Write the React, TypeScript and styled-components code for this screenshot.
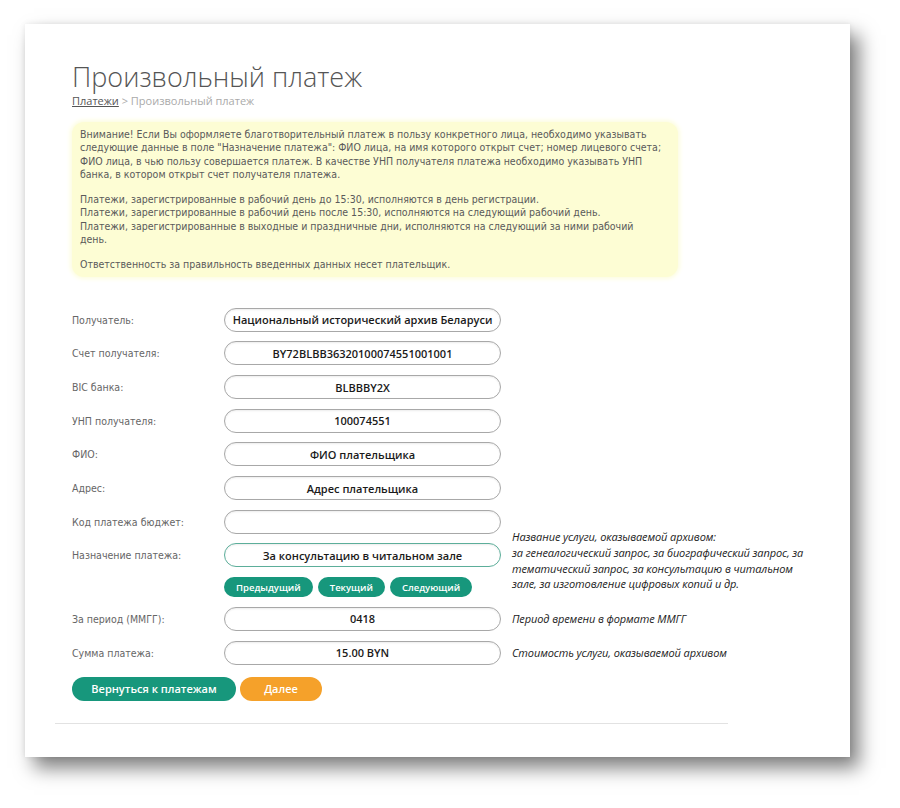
import React from "react";
import styled, { createGlobalStyle } from "styled-components";

const GlobalStyle = createGlobalStyle`
  html, body {
    margin: 0;
    padding: 0;
    background: #fff;
  }
  * { box-sizing: border-box; }
`;

const Page = styled.div`
  padding: 24px 0 0 25px;
  min-height: 808px;
`;

const Card = styled.div`
  width: 825px;
  height: 733px;
  padding: 37px 0 0 47px;
  background: #fff;
  box-shadow: 9px 11px 18px rgba(0, 0, 0, 0.5), 0 0 6px rgba(0, 0, 0, 0.08);
`;

const Title = styled.h1`
  margin: 0;
  font-family: "Open Sans", sans-serif;
  font-weight: 300;
  font-size: 27px;
  line-height: 31px;
  color: #555;
`;

const Crumbs = styled.div`
  margin-top: 2px;
  font-family: "Open Sans", sans-serif;
  font-size: 11px;
  line-height: 14px;
  color: #aaa;
`;

const CrumbLink = styled.a`
  color: #555;
  text-decoration: underline;
`;

const Notice = styled.div`
  margin-top: 14px;
  width: 606px;
  padding: 6px 8px 5px 8px;
  background: #fdfdd4;
  border-radius: 12px;
  box-shadow: 0 0 4px 2px #fdfde0;
  font-family: "DejaVu Sans Condensed", "DejaVu Sans", sans-serif;
  font-size: 10.5px;
  line-height: 13.3px;
  color: #5a5a5a;
  white-space: nowrap;
`;

const Para = styled.p`
  margin: 0;
  & + & { margin-top: 12px; }
`;

const Form = styled.div`
  margin-top: 31px;
  display: grid;
  grid-template-columns: 152px 277px 1fr;
  row-gap: 9.7px;
`;

const Label = styled.div`
  grid-column: 1;
  align-self: center;
  font-family: "DejaVu Sans Condensed", "DejaVu Sans", sans-serif;
  font-size: 10.5px;
  color: #666;
`;

const Field = styled.input<{ $accent?: boolean }>`
  grid-column: 2;
  height: 24px;
  width: 277px;
  border: 1px solid ${(p) => (p.$accent ? "#5cae9a" : "#a8a8a8")};
  border-radius: 12px;
  background: #fff;
  box-shadow: inset 0 1px 2px rgba(0, 0, 0, 0.08);
  text-align: center;
  font-family: "Open Sans", sans-serif;
  font-weight: 600;
  font-size: 11px;
  color: #1a1a1a;
  outline: none;
  padding: 0 6px;
`;

const Note = styled.div<{ $rows?: string; $end?: boolean }>`
  grid-column: 3;
  grid-row: ${(p) => p.$rows || "auto"};
  align-self: ${(p) => (p.$end ? "end" : "center")};
  padding-left: 11px;
  padding-bottom: ${(p) => (p.$end ? "5px" : "0")};
  font-family: "Open Sans", sans-serif;
  font-style: italic;
  font-size: 11px;
  letter-spacing: -0.1px;
  line-height: 15.7px;
  color: #222;
  white-space: nowrap;
`;

const PeriodButtons = styled.div`
  grid-column: 2;
  display: flex;
  gap: 5px;
`;

const SmallButton = styled.button`
  height: 20px;
  padding: 0 12px;
  border: none;
  border-radius: 10px;
  background: #17977c;
  color: #fff;
  font-family: "Open Sans", sans-serif;
  font-weight: 600;
  font-size: 9.5px;
  cursor: pointer;
`;

const Actions = styled.div`
  margin-top: 12px;
  display: flex;
  gap: 4px;
`;

const Button = styled.button<{ $variant?: "primary" | "accent" }>`
  height: 24px;
  width: ${(p) => (p.$variant === "accent" ? "82px" : "164px")};
  border: none;
  border-radius: 12px;
  background: ${(p) => (p.$variant === "accent" ? "#f5a12a" : "#17977c")};
  color: #fff;
  font-family: "Open Sans", sans-serif;
  font-weight: 600;
  font-size: 11px;
  cursor: pointer;
`;

const Divider = styled.hr`
  margin: 22px 0 0 -17px;
  width: 673px;
  border: none;
  border-top: 1px solid #e2e2e2;
`;

const fields = [
  { label: "Получатель:", value: "Национальный исторический архив Беларуси" },
  { label: "Счет получателя:", value: "BY72BLBB36320100074551001001" },
  { label: "BIC банка:", value: "BLBBBY2X" },
  { label: "УНП получателя:", value: "100074551" },
  { label: "ФИО:", value: "ФИО плательщика" },
  { label: "Адрес:", value: "Адрес плательщика" },
  { label: "Код платежа бюджет:", value: "" },
];

export default function App() {
  return (
    <>
      <GlobalStyle />
      <Page>
        <Card>
          <Title>Произвольный платеж</Title>
          <Crumbs>
            <CrumbLink>Платежи</CrumbLink> &gt; Произвольный платеж
          </Crumbs>
          <Notice>
            <Para>
              Внимание! Если Вы оформляете благотворительный платеж в пользу конкретного лица, необходимо указывать
              <br />
              следующие данные в поле "Назначение платежа": ФИО лица, на имя которого открыт счет; номер лицевого счета;
              <br />
              ФИО лица, в чью пользу совершается платеж. В качестве УНП получателя платежа необходимо указывать УНП
              <br />
              банка, в котором открыт счет получателя платежа.
            </Para>
            <Para>
              Платежи, зарегистрированные в рабочий день до 15:30, исполняются в день регистрации.
              <br />
              Платежи, зарегистрированные в рабочий день после 15:30, исполняются на следующий рабочий день.
              <br />
              Платежи, зарегистрированные в выходные и праздничные дни, исполняются на следующий за ними рабочий
              <br />
              день.
            </Para>
            <Para>Ответственность за правильность введенных данных несет плательщик.</Para>
          </Notice>

          <Form>
            {fields.map((f) => (
              <React.Fragment key={f.label}>
                <Label>{f.label}</Label>
                <Field readOnly value={f.value} />
              </React.Fragment>
            ))}

            <Label>Назначение платежа:</Label>
            <Field $accent readOnly value="За консультацию в читальном зале" />
            <Note $rows="7 / 10" $end>
              Название услуги, оказываемой архивом:
              <br />
              за генеалогический запрос, за биографический запрос, за
              <br />
              тематический запрос, за консультацию в читальном
              <br />
              зале, за изготовление цифровых копий и др.
            </Note>

            <PeriodButtons>
              <SmallButton>Предыдущий</SmallButton>
              <SmallButton>Текущий</SmallButton>
              <SmallButton>Следующий</SmallButton>
            </PeriodButtons>

            <Label>За период (ММГГ):</Label>
            <Field readOnly value="0418" />
            <Note>Период времени в формате ММГГ</Note>

            <Label>Сумма платежа:</Label>
            <Field readOnly value="15.00 BYN" />
            <Note>Стоимость услуги, оказываемой архивом</Note>
          </Form>

          <Actions>
            <Button>Вернуться к платежам</Button>
            <Button $variant="accent">Далее</Button>
          </Actions>
          <Divider />
        </Card>
      </Page>
    </>
  );
}
